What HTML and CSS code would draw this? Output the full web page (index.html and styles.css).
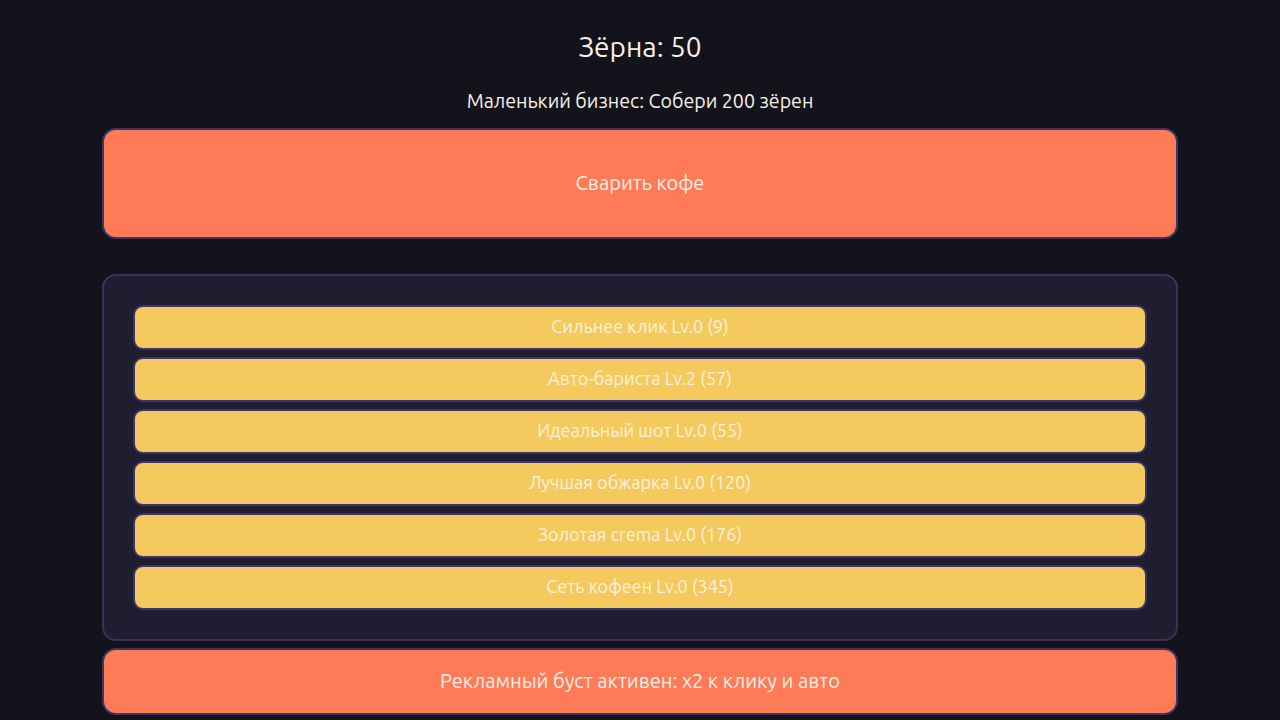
FILE: index.html
```html
<!DOCTYPE html>
<html lang="ru">
<head>
<meta charset="utf-8">
<title>Кофейня</title>
<link rel="stylesheet" href="styles.css">
</head>
<body>
<main class="app">
  <h1 class="beans">Зёрна: 50</h1>
  <p class="goal">Маленький бизнес: Собери 200 зёрен</p>
  <button class="brew">Сварить кофе</button>
  <section class="shop">
    <button class="upgrade">Сильнее клик Lv.0 (9)</button>
    <button class="upgrade">Авто-бариста Lv.2 (57)</button>
    <button class="upgrade">Идеальный шот Lv.0 (55)</button>
    <button class="upgrade">Лучшая обжарка Lv.0 (120)</button>
    <button class="upgrade">Золотая crema Lv.0 (176)</button>
    <button class="upgrade">Сеть кофеен Lv.0 (345)</button>
  </section>
  <button class="boost">Рекламный буст активен: x2 к клику и авто</button>
</main>
</body>
</html>
```
FILE: styles.css
```css
html, body {
  margin: 0;
  padding: 0;
  background: #13131c;
  height: 100%;
  overflow: hidden;
}
body {
  font-family: "Ubuntu", "Fira Sans", "DejaVu Sans", sans-serif;
  color: #f7f1e8;
}
.app {
  width: 1076px;
  margin: 0 auto;
  display: flex;
  flex-direction: column;
  align-items: stretch;
  padding-top: 27px;
}
.beans {
  margin: 0;
  text-align: center;
  font-size: 28px;
  font-weight: normal;
  line-height: 40px;
}
.goal {
  margin: 22px 0 0;
  text-align: center;
  font-size: 19.6px;
  line-height: 24px;
}
button {
  font-family: inherit;
  cursor: pointer;
  padding: 0 0 3px;
}
.brew {
  margin-top: 15px;
  height: 111px;
  background: #ff7b57;
  border: 2px solid #3d3566;
  border-radius: 14px;
  color: #fdf0e6;
  font-size: 20px;
}
.shop {
  margin-top: 35px;
  background: #1f1d30;
  border: 2px solid #3a3160;
  border-radius: 14px;
  padding: 29px;
  display: flex;
  flex-direction: column;
  gap: 7px;
}
.upgrade {
  height: 45px;
  background: #f4ca5e;
  border: 2px solid #3d3566;
  border-radius: 10px;
  color: #fcf1dc;
  font-size: 18px;
}
.boost {
  margin-top: 7px;
  height: 67px;
  background: #ff7b57;
  border: 2px solid #3d3566;
  border-radius: 14px;
  color: #fdf0e6;
  font-size: 20px;
}
```
